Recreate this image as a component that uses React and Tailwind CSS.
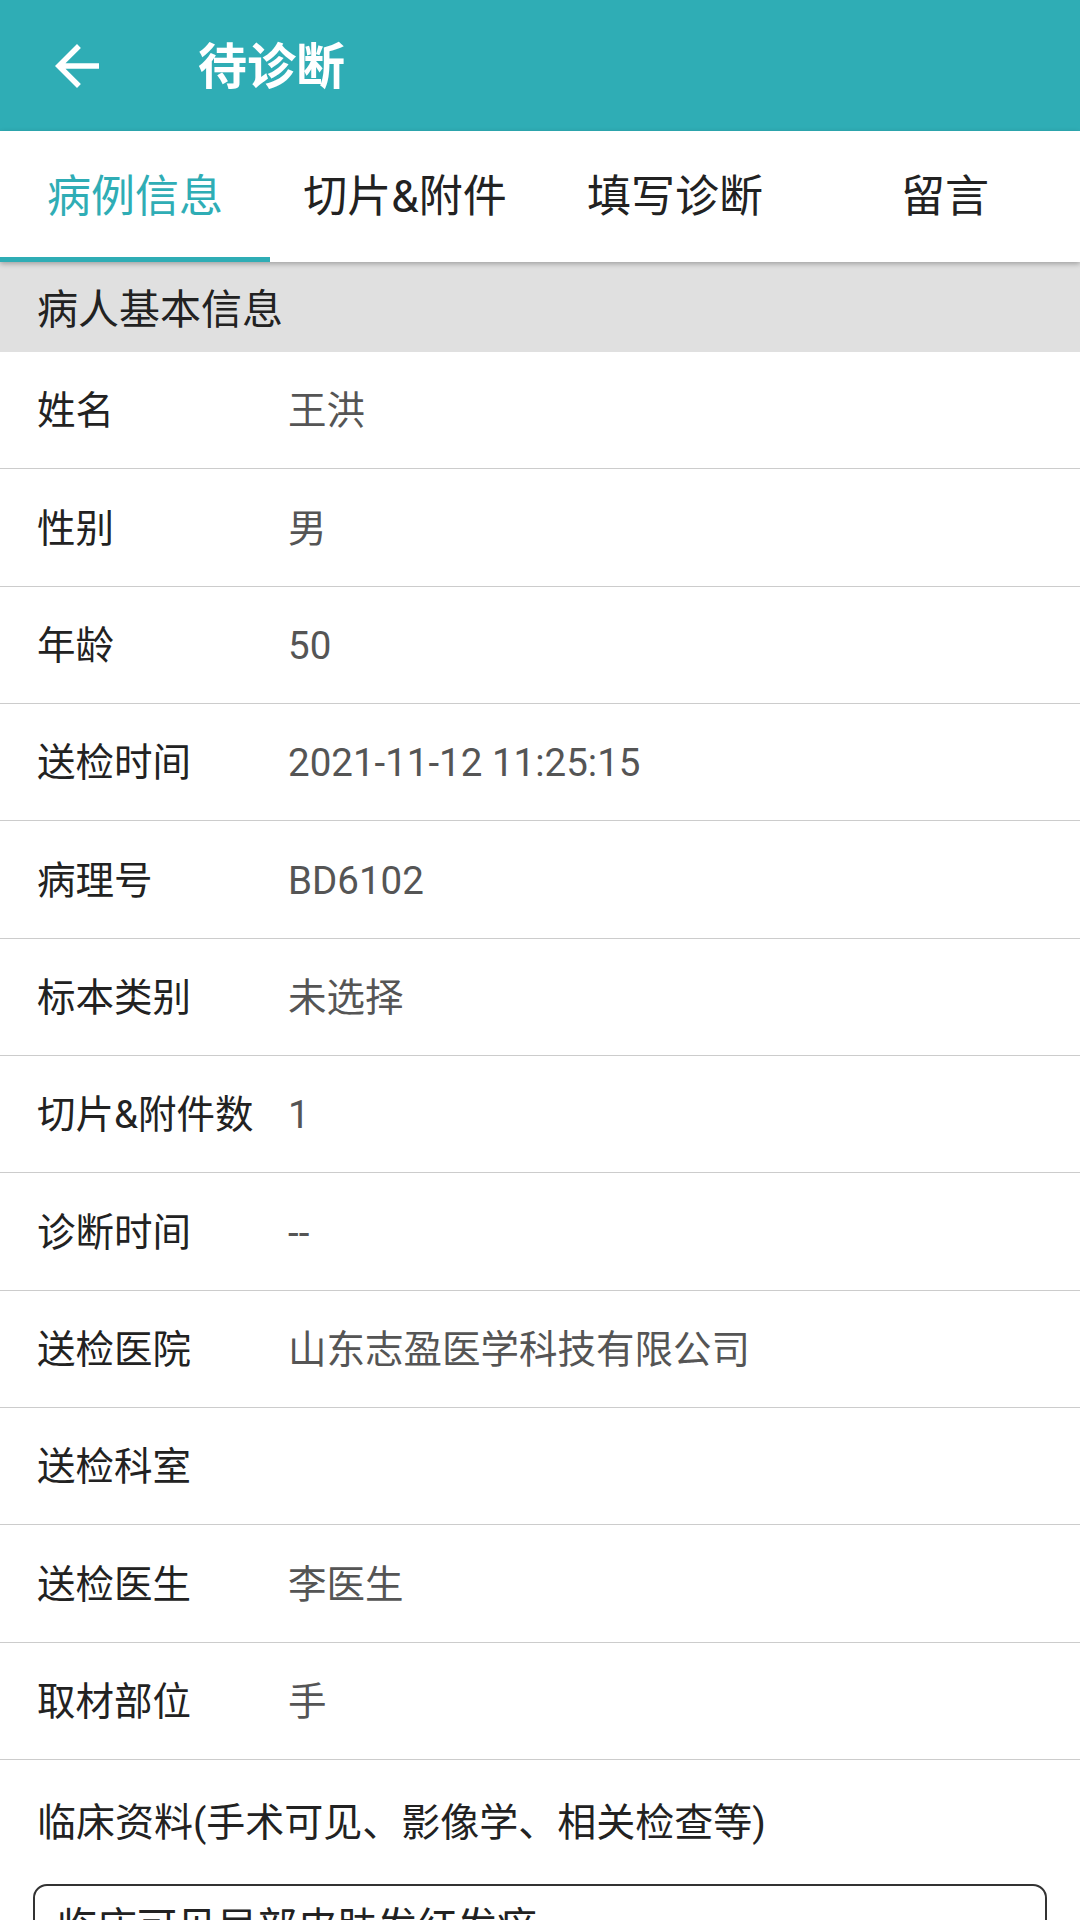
import React from "react";

const rows = [
  ["姓名", "王洪"],
  ["性别", "男"],
  ["年龄", "50"],
  ["送检时间", "2021-11-12 11:25:15"],
  ["病理号", "BD6102"],
  ["标本类别", "未选择"],
  ["切片&附件数", "1"],
  ["诊断时间", "--"],
  ["送检医院", "山东志盈医学科技有限公司"],
  ["送检科室", ""],
  ["送检医生", "李医生"],
  ["取材部位", "手"],
];

const tabs = ["病例信息", "切片&附件", "填写诊断", "留言"];

export default function App() {
  return (
    <div
      className="w-[1080px] h-[1920px] overflow-hidden bg-white flex flex-col"
      style={{ fontFamily: "Roboto, 'Noto Sans CJK SC', 'Noto Sans', sans-serif" }}
    >
      {/* Toolbar */}
      <div className="h-[131px] bg-[#2fadb5] flex items-center shrink-0">
        <div className="w-[154px] h-full flex items-center justify-center">
          <svg width="66" height="66" viewBox="0 0 24 24" fill="#ffffff">
            <path d="M20 11H7.83l5.59-5.59L12 4l-8 8 8 8 1.41-1.41L7.83 13H20v-2z" />
          </svg>
        </div>
        <div className="ml-[44px] pt-[4px] text-white text-[49px] font-bold leading-none">待诊断</div>
      </div>

      {/* Tabs */}
      <div className="relative z-10 h-[131px] bg-white flex shrink-0 shadow-[0_2px_5px_rgba(0,0,0,0.28)]">
        {tabs.map((t, i) => (
          <div key={t} className="relative flex-1 flex items-center justify-center">
            <span
              className={
                "text-[44px] leading-none " + (i === 0 ? "text-[#2fadb5]" : "text-[#222222]")
              }
            >
              {t}
            </span>
            {i === 0 && <div className="absolute left-0 right-0 bottom-0 h-[5px] bg-[#2fadb5]" />}
          </div>
        ))}
      </div>

      {/* Section header */}
      <div className="h-[90px] bg-[#e0e0e0] flex items-center pl-[37px] pt-[7px] shrink-0">
        <span className="text-[41px] text-[#222222] leading-none">病人基本信息</span>
      </div>

      {/* Rows */}
      <div className="flex flex-col shrink-0">
        {rows.map(([k, v]) => (
          <div
            key={k}
            className="h-[117.33px] border-b border-[#cccccc] flex items-center pl-[37px] pt-[3px]"
          >
            <div className="w-[251px] text-[38.5px] text-[#222222] leading-none whitespace-nowrap">{k}</div>
            <div className="text-[38.5px] text-[#555555] leading-none whitespace-nowrap">{v}</div>
          </div>
        ))}
      </div>

      {/* Clinical info */}
      <div className="pt-[40px] pl-[37px] text-[39px] leading-[46px] text-[#222222] shrink-0">
        临床资料(手术可见、影像学、相关检查等)
      </div>
      <div className="mt-[38px] mx-[33px] border-2 border-[#333333] rounded-[14px] px-[22px] pt-[18px] pb-[40px] shrink-0">
        <div className="text-[40px] leading-[48px] text-[#222222]">临床可见局部皮肤发红发痒</div>
      </div>
    </div>
  );
}
